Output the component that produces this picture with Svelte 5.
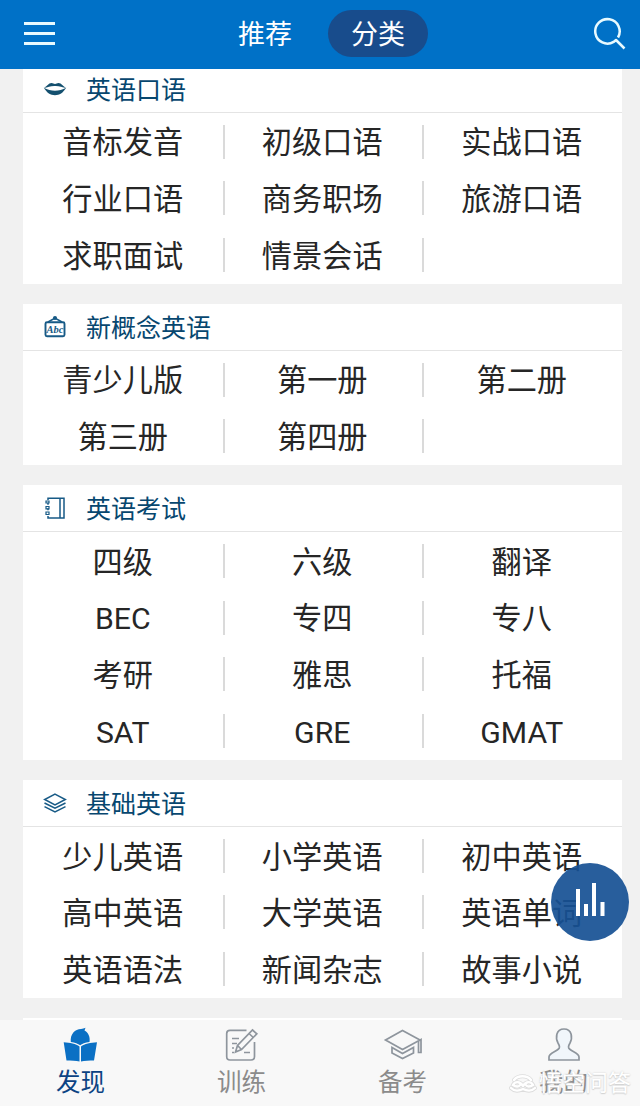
<script>
    const sections = [
        {
            title: '英语口语',
            icon: 'lips',
            items: ['音标发音', '初级口语', '实战口语', '行业口语', '商务职场', '旅游口语', '求职面试', '情景会话', '']
        },
        {
            title: '新概念英语',
            icon: 'board',
            items: ['青少儿版', '第一册', '第二册', '第三册', '第四册', '']
        },
        {
            title: '英语考试',
            icon: 'notebook',
            items: ['四级', '六级', '翻译', 'BEC', '专四', '专八', '考研', '雅思', '托福', 'SAT', 'GRE', 'GMAT']
        },
        {
            title: '基础英语',
            icon: 'layers',
            items: ['少儿英语', '小学英语', '初中英语', '高中英语', '大学英语', '英语单词', '英语语法', '新闻杂志', '故事小说']
        },
        { title: '', icon: '', items: [] }
    ]

    const navs = [
        { label: '发现', icon: 'discover' },
        { label: '训练', icon: 'train' },
        { label: '备考', icon: 'exam' },
        { label: '我的', icon: 'mine' }
    ]

    let tab = $state('分类')
    let nav = $state('发现')
</script>

<div class="app">
    <header class="topbar">
        <button class="menu" aria-label="菜单">
            <span></span>
            <span></span>
            <span></span>
        </button>
        <div class="tabs">
            {#each ['推荐', '分类'] as name}
                <button class="tab" class:selected={tab === name} onclick={() => (tab = name)}>{name}</button>
            {/each}
        </div>
        <button class="search" aria-label="搜索">
            <svg width="34" height="34" viewBox="0 0 34 34" fill="none">
                <path d="M25 20.5A12.2 12.2 0 1 0 20.6 24.9L23 23L31.5 31.5" stroke="#e8faff" stroke-width="2.5" stroke-linejoin="round"/>
            </svg>
        </button>
    </header>

    <main>
        {#each sections as section}
            <section class="card">
                <h2>
                    <svg width="24" height="24" viewBox="0 0 24 24" fill="none" stroke="#175a86" stroke-width="1.5">
                        {#if section.icon === 'lips'}
                            <g fill="#14506f" stroke="none">
                                <path d="M0.8 10.8C4 9.5 5.5 6 8.5 6C10 6 10.8 7 12 7C13.2 7 14 6 15.5 6C18.5 6 20 9.5 23.2 10.8C19 10.3 16.5 8.7 12 8.9C7.5 8.7 5 10.3 0.8 10.8Z"/>
                                <path d="M0.8 10.8C8 14.8 16 14.8 23.2 10.8C20 16 16.5 18.2 12 18.2C7.5 18.2 4 16 0.8 10.8Z"/>
                            </g>
                        {:else if section.icon === 'board'}
                            <rect x="2.5" y="7.2" width="19" height="14" rx="1.5" stroke-width="1.9"/>
                            <path d="M5 7L12 3L19 7"/>
                            <circle cx="12" cy="3" r="1.3" fill="#175a86"/>
                            <text x="12" y="18" text-anchor="middle">Abc</text>
                        {:else if section.icon === 'notebook'}
                            <path d="M5 4V2.2H21V22H5V20M17 2.2V22M5 6.8V8.8M5 12.5V14.3"/>
                            <path d="M3 5H6V7H3ZM3 10.5H6V12.8H3ZM3 16H6V18.5H3Z" stroke-width="1.2"/>
                        {:else if section.icon === 'layers'}
                            <path d="M12 3.2L22.3 8.5L12 13.8L1.7 8.5Z"/>
                            <path d="M1.5 12L12 17.2L22.5 12M1.5 15.6L12 20.8L22.5 15.6"/>
                        {/if}
                    </svg>
                    <span>{section.title}</span>
                </h2>
                <div class="grid">
                    {#each section.items as item}
                        <div class="item">{item}</div>
                    {/each}
                </div>
            </section>
        {/each}
    </main>

    <button class="float" aria-label="学习统计">
        <svg width="30" height="34" viewBox="0 0 30 34" fill="#fff">
            <path d="M1 7H5V34H1ZM9 22H13V34H9ZM17 1H21V34H17ZM25.5 20H29.5V34H25.5Z"/>
        </svg>
    </button>

    <nav>
        {#each navs as { label, icon }}
            <button class="nav-item" class:active={nav === label} onclick={() => (nav = label)}>
                <svg width="40" height="36" viewBox="1 0 40 36" fill="none" stroke="#8e959d" stroke-width="1.7">
                    {#if icon === 'discover'}
                        <g fill="#0b70c4" stroke="none">
                            <path d="M10.8 15C10 7 15 2.2 21 2C23 2 23.5 1.5 25.5 0.8L24.5 3.5C28 5.5 30.5 9.5 29.5 15C25 15.5 22 16.8 20.2 18.3C18 16.8 15 15.5 10.8 15Z"/>
                            <path d="M3.7 15.2C10 15.5 16 16.5 19.5 19.5V34.5C16 33.5 11 33.5 6.5 33.5Z"/>
                            <path d="M37 15.2C30.5 15.5 24.5 16.5 21 19.5V34.5C24.5 33.5 29.5 33.5 34 33.5Z"/>
                        </g>
                    {:else if icon === 'train'}
                        <path d="M25.5 3.3H9Q5.7 3.3 5.7 6.5V29.5Q5.7 33 9 33H30Q33.5 33 33.5 29.5V15"/>
                        <path d="M31.5 3L35.8 6.8L20.5 22.5L14.5 25L16.5 18.5ZM28 6.5L32.3 10.5M16.5 18.5L20.5 22.5"/>
                        <path d="M11 11.5H18M11 16.5H16M11 21H13M11 25.5H13M23 25.5H29"/>
                    {:else if icon === 'exam'}
                        <path d="M20.5 3.5L38 13L20.5 22.5L3.5 13Z"/>
                        <path d="M10 20.5V26L20.5 31.5L31.5 26V20.5L20.5 26.5Z"/>
                        <path d="M36.5 14V25.5H39V12.5L37.5 13.5"/>
                    {:else}
                        <path d="M6 33V30C6 26 12 25 15.5 22C17.5 20.5 16.5 18.5 15 16C12.5 11.5 12.5 2 21 2C29.5 2 29.5 11.5 27 16C25.5 18.5 24.5 20.5 26.5 22C30 25 36 26 36 30V33Z" fill="#f1f6fb"/>
                    {/if}
                </svg>
                <span>{label}</span>
            </button>
        {/each}
    </nav>

    <div class="watermark">
        <svg width="28" height="20" viewBox="0 0 28 20" fill="none">
            {#each [['#dcdcdc', 4], ['#fff', 2.4]] as [color, width]}
                <g stroke={color} stroke-width={width} stroke-linecap="round">
                    <path d="M5 6C9 1 18 1 22 6"/>
                    <path d="M14 12C11 7 6 7 4 11C7 13 10 13 11 11M14 12C17 7 22 7 24 11C21 13 18 13 17 11"/>
                    <path d="M2 14C6 18 10 17 14 15C18 17 22 18 26 14"/>
                </g>
            {/each}
        </svg>
        悟空问答
    </div>
</div>

<style>
    :global(body) {
        margin: 0;
        overflow: hidden;
    }

    .app {
        position: relative;
        display: flex;
        flex-direction: column;
        width: 640px;
        height: 1106px;
        overflow: hidden;
        background: #f1f1f1;
        font-family: Roboto, 'Noto Sans CJK SC', sans-serif;
    }

    button {
        padding: 0;
        border: none;
        background: none;
        font-family: inherit;
        cursor: pointer;
    }

    .topbar {
        position: relative;
        z-index: 2;
        flex: none;
        display: flex;
        align-items: center;
        justify-content: space-between;
        box-sizing: border-box;
        height: 69px;
        padding: 0 13px 2px 24px;
        background: #0071c7;
    }

    .menu {
        display: flex;
        flex-direction: column;
        gap: 7px;
        width: 31px;
    }

    .menu span {
        height: 3.3px;
        background: #e8faff;
    }

    .tabs {
        display: flex;
        gap: 13px;
        margin-left: 160px;
        margin-right: auto;
    }

    .tab {
        box-sizing: border-box;
        width: 100px;
        height: 47px;
        padding-top: 3px;
        border-radius: 24px;
        font-size: 27px;
        line-height: 44px;
        color: #fff;
    }

    .tab.selected {
        background: #184c8c;
    }

    .search svg {
        display: block;
    }

    main {
        flex: 1;
        min-height: 0;
        display: flex;
        flex-direction: column;
        gap: 20px;
        margin-top: -3.5px;
        padding: 0 18.5px 0 23px;
        overflow: hidden;
    }

    .card {
        flex: none;
        background: #fff;
    }

    h2 {
        display: flex;
        align-items: center;
        gap: 19px;
        height: 46px;
        margin: 0;
        padding-left: 20px;
        border-bottom: 1px solid #e4e4e4;
        font-size: 25px;
        font-weight: 400;
        line-height: 30px;
        color: #07476f;
    }

    h2 span {
        padding-top: 4px;
    }

    h2 text {
        font: italic bold 10.5px 'Liberation Serif', serif;
        fill: #175a86;
        stroke: none;
    }

    .grid {
        display: grid;
        grid-template-columns: repeat(3, 1fr);
        grid-auto-rows: 56.7px;
        padding-top: 1px;
    }

    .item {
        display: flex;
        align-items: center;
        justify-content: center;
        position: relative;
        padding-top: 3px;
        font-size: 30.2px;
        line-height: 50px;
        color: #262626;
    }

    .item:not(:nth-child(3n))::after {
        content: '';
        position: absolute;
        right: -2px;
        top: 11px;
        width: 2px;
        height: 34px;
        background: #dadada;
    }

    .float {
        position: absolute;
        left: 551px;
        top: 863px;
        z-index: 3;
        display: flex;
        align-items: center;
        justify-content: center;
        width: 78px;
        height: 78px;
        padding-bottom: 7px;
        border-radius: 50%;
        background: rgba(22, 80, 148, 0.92);
    }

    nav {
        flex: none;
        display: flex;
        height: 86px;
        margin-right: -4px;
        background: #f8f8f8;
    }

    .nav-item {
        flex: 1;
        display: flex;
        flex-direction: column;
        align-items: center;
        padding-top: 7px;
        font-size: 24.5px;
        line-height: 39px;
        color: #8b8b8b;
    }

    .nav-item.active {
        color: #0c4383;
    }

    .watermark {
        position: absolute;
        left: 509px;
        top: 1068px;
        z-index: 4;
        display: flex;
        align-items: center;
        gap: 2px;
        font-size: 23px;
        line-height: 32px;
        color: #fff;
        text-shadow: 0 0 2px #ccc, 0 1px 1px #d4d4d4;
    }
</style>
